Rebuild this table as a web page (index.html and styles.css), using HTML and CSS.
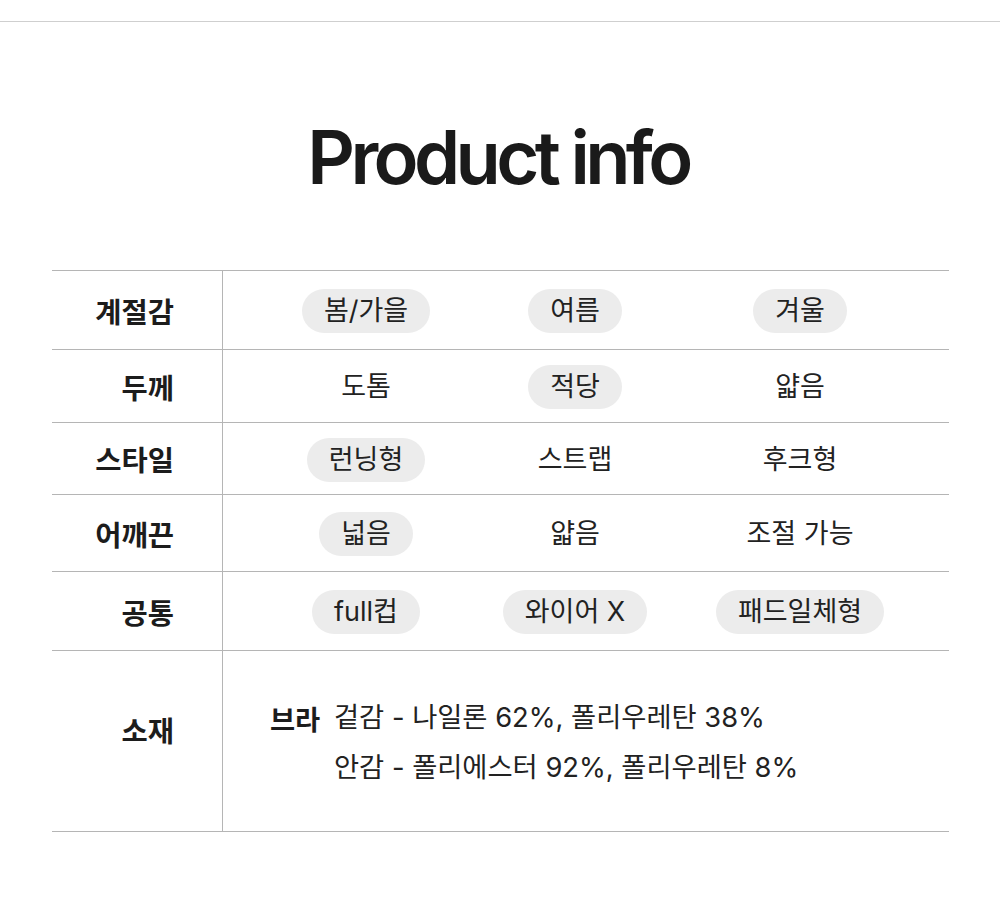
FILE: index.html
```html
<!DOCTYPE html>
<html lang="ko">
<head>
<meta charset="utf-8">
<link rel="stylesheet" href="styles.css">
</head>
<body>
<div class="topline"></div>
<h1 class="title">Product info</h1>
<div class="table">
  <div class="row r1">
    <div class="label">계절감</div>
    <div class="vals">
      <div class="cell"><span class="pill">봄/가을</span></div>
      <div class="cell"><span class="pill">여름</span></div>
      <div class="cell"><span class="pill">겨울</span></div>
    </div>
  </div>
  <div class="row r2">
    <div class="label">두께</div>
    <div class="vals">
      <div class="cell"><span class="txt">도톰</span></div>
      <div class="cell"><span class="pill">적당</span></div>
      <div class="cell"><span class="txt">얇음</span></div>
    </div>
  </div>
  <div class="row r3">
    <div class="label">스타일</div>
    <div class="vals">
      <div class="cell"><span class="pill">런닝형</span></div>
      <div class="cell"><span class="txt">스트랩</span></div>
      <div class="cell"><span class="txt">후크형</span></div>
    </div>
  </div>
  <div class="row r4">
    <div class="label">어깨끈</div>
    <div class="vals">
      <div class="cell"><span class="pill">넓음</span></div>
      <div class="cell"><span class="txt">얇음</span></div>
      <div class="cell"><span class="txt">조절 가능</span></div>
    </div>
  </div>
  <div class="row r5">
    <div class="label">공통</div>
    <div class="vals">
      <div class="cell"><span class="pill">full컵</span></div>
      <div class="cell"><span class="pill">와이어 X</span></div>
      <div class="cell"><span class="pill">패드일체형</span></div>
    </div>
  </div>
  <div class="row r6">
    <div class="label label-top">소재</div>
    <div class="material">
      <div class="mline"><span class="mhead">브라</span><span>겉감 - 나일론 62%, 폴리우레탄 38%</span></div>
      <div class="mline"><span class="mhead"></span><span>안감 - 폴리에스터 92%, 폴리우레탄 8%</span></div>
    </div>
  </div>
</div>
</body>
</html>
```
FILE: styles.css
```css
html, body {
  margin: 0;
  padding: 0;
  background: #fff;
}
body {
  width: 1000px;
  height: 902px;
  overflow: hidden;
  font-family: Inter, "Noto Sans CJK KR", sans-serif;
  color: #222;
}
.topline {
  margin-top: 21px;
  border-top: 1px solid #cfcfcf;
}
.title {
  margin: 0;
  padding-top: 90px;
  height: 248px;
  box-sizing: border-box;
  text-align: center;
  font-family: Inter, sans-serif;
  font-weight: 600;
  font-size: 74px;
  line-height: 90px;
  letter-spacing: -4.6px;
  text-indent: -4px;
  color: #1a1a1a;
}
.table {
  margin: 0 51px 0 52px;
  border-top: 1px solid #b5b5b5;
}
.row {
  display: flex;
  border-bottom: 1px solid #b5b5b5;
}
.r1 { height: 78px; }
.r2 { height: 72px; }
.r3 { height: 71px; }
.r4 { height: 76px; }
.r5 { height: 78px; }
.r6 { height: 180px; }
.label {
  width: 171px;
  box-sizing: border-box;
  border-right: 1px solid #b5b5b5;
  padding-right: 48px;
  display: flex;
  align-items: center;
  justify-content: flex-end;
  font-family: "Noto Sans CJK KR", sans-serif;
  font-weight: 700;
  font-size: 28.5px;
  color: #1c1c1c;
}
.label-top {
  align-items: flex-start;
  padding-top: 58px;
}
.vals {
  flex: 1;
  display: grid;
  grid-template-columns: 208px 210px 240px;
  padding-left: 39px;
  padding-top: 2px;
  align-items: center;
}
.cell {
  display: flex;
  justify-content: center;
  align-items: center;
}
.pill, .txt {
  font-size: 27px;
  line-height: 44px;
  height: 44px;
  color: #222;
  white-space: nowrap;
}
.pill {
  background: #ececec;
  border-radius: 22px;
  padding: 0 22px;
}
.material {
  flex: 1;
  padding-left: 47px;
  padding-top: 42px;
  font-size: 27.3px;
  color: #222;
}
.mline {
  display: flex;
  height: 50px;
  line-height: 50px;
  white-space: nowrap;
}
.mhead {
  width: 64px;
  font-family: "Noto Sans CJK KR", sans-serif;
  font-weight: 700;
  color: #1c1c1c;
}
```
